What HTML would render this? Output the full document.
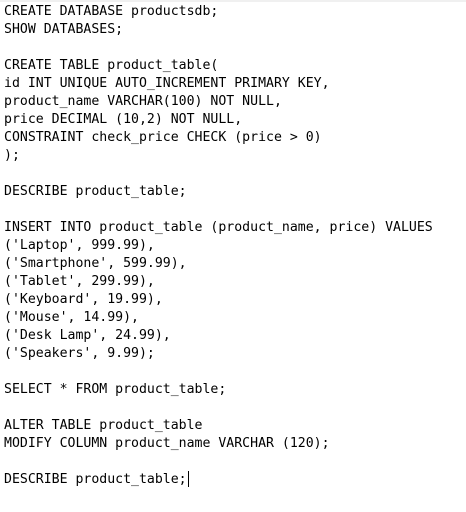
<!DOCTYPE html>
<html><head><style>
html,body{margin:0;padding:0;background:#fff;width:466px;height:512px;overflow:hidden}
.top{position:absolute;left:0;top:0;width:466px;height:2px;background:#f0f0f0}
pre{position:absolute;left:4px;top:3px;margin:0;font-family:"DejaVu Sans Mono","Liberation Mono",monospace;font-size:13.2px;line-height:18px;color:#000}
.cur{display:inline-block;width:1px;height:16px;background:#000;vertical-align:-4px;margin-left:1px}
</style></head><body>
<div class="top"></div>
<pre>CREATE DATABASE productsdb;
SHOW DATABASES;

CREATE TABLE product_table(
id INT UNIQUE AUTO_INCREMENT PRIMARY KEY,
product_name VARCHAR(100) NOT NULL,
price DECIMAL (10,2) NOT NULL,
CONSTRAINT check_price CHECK (price &gt; 0)
);

DESCRIBE product_table;

INSERT INTO product_table (product_name, price) VALUES
('Laptop', 999.99),
('Smartphone', 599.99),
('Tablet', 299.99),
('Keyboard', 19.99),
('Mouse', 14.99),
('Desk Lamp', 24.99),
('Speakers', 9.99);

SELECT * FROM product_table;

ALTER TABLE product_table
MODIFY COLUMN product_name VARCHAR (120);

DESCRIBE product_table;<span class="cur"></span></pre>
</body></html>
